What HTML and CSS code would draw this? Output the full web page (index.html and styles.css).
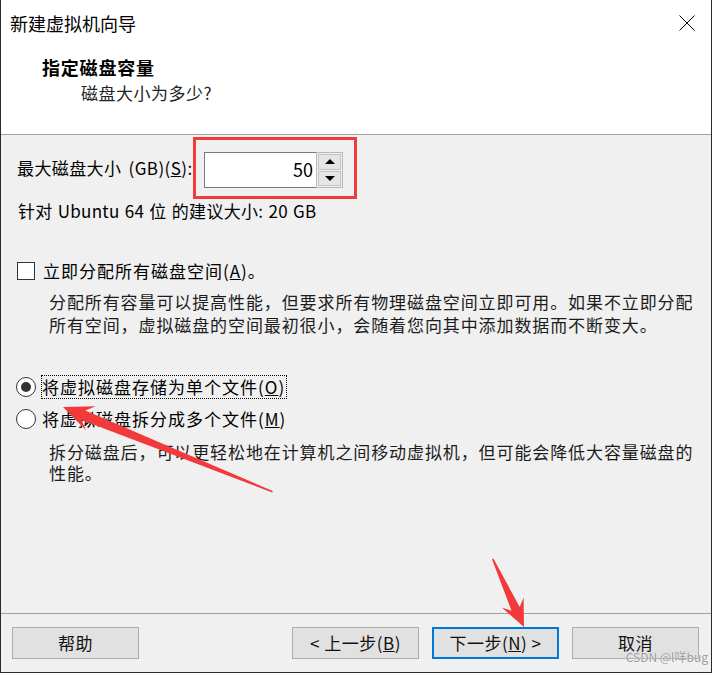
FILE: index.html
```html
<!DOCTYPE html>
<html lang="zh-CN">
<head>
<meta charset="utf-8">
<title>新建虚拟机向导</title>
<link rel="stylesheet" href="styles.css">
</head>
<body>
<div class="window">
  <div class="header">
    <div class="titlebar">
      <span class="title">新建虚拟机向导</span>
      <svg class="close" width="16" height="16" viewBox="0 0 16 16"><path d="M0.5 0.5 L15.5 15.5 M15.5 0.5 L0.5 15.5" stroke="#000" stroke-width="1" fill="none"/></svg>
    </div>
    <div class="heading">指定磁盘容量</div>
    <div class="subheading">磁盘大小为多少?</div>
  </div>

  <div class="content">
    <div class="size-row">
      <span class="size-label">最大磁盘大小 (GB)(<u>S</u>):</span>
      <div class="highlight">
        <div class="spin">
          <div class="spin-input">50</div>
          <div class="spin-buttons">
            <div class="spin-btn"><span class="tri-up"></span></div>
            <div class="spin-btn"><span class="tri-down"></span></div>
          </div>
        </div>
      </div>
    </div>
    <div class="hint">针对 Ubuntu 64 位 的建议大小: 20 GB</div>

    <div class="check-row">
      <span class="checkbox"></span>
      <span class="opt-label">立即分配所有磁盘空间(<u>A</u>)。</span>
    </div>
    <p class="desc desc-1">分配所有容量可以提高性能，但要求所有物理磁盘空间立即可用。如果不立即分配所有空间，虚拟磁盘的空间最初很小，会随着您向其中添加数据而不断变大。</p>

    <div class="radio-row radio-first">
      <span class="radio checked"></span>
      <span class="opt-label focus">将虚拟磁盘存储为单个文件(<u>O</u>)</span>
    </div>
    <div class="radio-row radio-second">
      <span class="radio"></span>
      <span class="opt-label">将虚拟磁盘拆分成多个文件(<u>M</u>)</span>
    </div>
    <p class="desc desc-2">拆分磁盘后，可以更轻松地在计算机之间移动虚拟机，但可能会降低大容量磁盘的性能。</p>
  </div>

  <div class="footer">
    <button class="btn">帮助</button>
    <div class="btn-group">
      <button class="btn">&lt; 上一步(<u>B</u>)</button>
      <button class="btn btn-default">下一步(<u>N</u>) &gt;</button>
      <button class="btn">取消</button>
    </div>
  </div>

  <div class="watermark">CSDN @l咩bug</div>

  <svg class="arrows" width="712" height="673" viewBox="0 0 712 673">
    <polygon fill="#f23a3d" points="63,407 95.7,406.2 85.3,410.6 272.8,491.0 272.2,492.5 81.5,419.9 85.9,430.3"/>
    <polygon fill="#f23a3d" points="524,627 523.6,597.5 519.7,606.9 493.4,558.6 492.0,559.2 511.5,610.7 501.8,607.5"/>
  </svg>
</div>
</body>
</html>
```

FILE: styles.css
```css
* { box-sizing: border-box; }

html, body {
  margin: 0;
  padding: 0;
  background: #f0f0f0;
}

.window {
  position: relative;
  width: 712px;
  height: 673px;
  background: #f0f0f0;
  border-left: 1px solid #2b2b2b;
  border-right: 1px solid #2b2b2b;
  border-bottom: 1px solid #2b2b2b;
  display: flex;
  flex-direction: column;
  font-family: "Noto Sans CJK SC", "Microsoft YaHei", sans-serif;
  color: #000;
  overflow: hidden;
}

/* ---------- header ---------- */
.header {
  flex: none;
  height: 135px;
  background: #fff;
  border-bottom: 1px solid #a0a0a0;
}

.titlebar {
  height: 45px;
  display: flex;
  align-items: center;
  justify-content: space-between;
  padding: 0 16px 0 9px;
}

.title {
  font-size: 18px;
  line-height: 24px;
}

.close { display: block; }

.heading {
  margin-top: 10px;
  padding-left: 41px;
  font-size: 18px;
  line-height: 24px;
  font-weight: bold;
  letter-spacing: 0.8px;
}

.subheading {
  margin-top: 2px;
  padding-left: 80px;
  font-size: 17px;
  line-height: 24px;
  letter-spacing: 0.5px;
  color: #222;
}

/* ---------- content ---------- */
.content {
  flex: 1;
  padding: 2px 0 0 15px;
  font-size: 17px;
}

.size-row {
  display: flex;
  align-items: center;
}

.size-label {
  width: 177px;
  padding-left: 1px;
  line-height: 24px;
  white-space: nowrap;
  letter-spacing: 0.4px;
  word-spacing: 3px;
}

.highlight {
  border: 3px solid #f23b3d;
  padding: 12px 11px 8px 8px;
}

.spin {
  display: flex;
  height: 36px;
}

.spin-input {
  width: 112px;
  height: 36px;
  background: #fff;
  border: 1px solid #7a7a7a;
  border-right: none;
  text-align: right;
  padding-right: 3px;
  font-size: 18px;
  line-height: 33px;
}

.spin-buttons {
  width: 27px;
  height: 36px;
  border: 1px solid #b9b9b9;
  background: #f0f0f0;
  display: flex;
  flex-direction: column;
  padding: 1px;
  gap: 1px;
}

.spin-btn {
  flex: 1;
  background: #e5e5e5;
  border: 1px solid #c4c4c4;
  display: flex;
  align-items: center;
  justify-content: center;
}

.tri-up {
  width: 0;
  height: 0;
  border-left: 5px solid transparent;
  border-right: 5px solid transparent;
  border-bottom: 5px solid #000;
}

.tri-down {
  width: 0;
  height: 0;
  border-left: 5px solid transparent;
  border-right: 5px solid transparent;
  border-top: 5px solid #000;
}

.hint {
  padding-left: 2px;
  line-height: 24px;
  margin-top: 0;
  letter-spacing: 0.3px;
  word-spacing: 1px;
}

.check-row {
  margin-top: 37px;
  height: 22px;
  display: flex;
  align-items: center;
  gap: 8px;
  padding-left: 1px;
}

.checkbox {
  width: 18px;
  height: 18px;
  border: 1px solid #333;
  background: #fff;
  flex: none;
}

.opt-label {
  line-height: 22px;
  letter-spacing: 1px;
  white-space: nowrap;
}

.desc {
  margin: 8px 0 0 0;
  padding-left: 33px;
  width: 692px;
  line-height: 23px;
  letter-spacing: 0.9px;
  color: #1c1c1c;
}

.radio-row {
  height: 24px;
  display: flex;
  align-items: center;
  gap: 6px;
}

.radio-first { margin-top: 39px; }
.radio-second { margin-top: 8px; }

.radio {
  width: 20px;
  height: 20px;
  border-radius: 50%;
  border: 1px solid #333;
  background: #fff;
  flex: none;
  display: flex;
  align-items: center;
  justify-content: center;
}

.radio.checked::after {
  content: "";
  width: 10px;
  height: 10px;
  border-radius: 50%;
  background: #333;
}

.focus {
  outline: 1px dotted #000;
  outline-offset: 0;
  padding-right: 1px;
}

.desc-2 {
  margin-top: 10px;
  line-height: 21px;
}

/* ---------- footer ---------- */
.footer {
  flex: none;
  height: 59px;
  border-top: 1px solid #a0a0a0;
  padding: 13px 12px 0 11px;
  display: flex;
  justify-content: space-between;
  align-items: flex-start;
}

.btn-group {
  display: flex;
  gap: 13px;
}

.btn {
  width: 127px;
  height: 32px;
  background: #e1e1e1;
  border: 1px solid #adadad;
  font-family: "Noto Sans CJK SC", "Microsoft YaHei", sans-serif;
  font-size: 17px;
  color: #111;
  padding: 0;
  margin: 0;
  line-height: 28px;
  letter-spacing: 0.5px;
}

.btn-default {
  border: 2px solid #0078d7;
}

.watermark {
  position: absolute;
  right: 3px;
  bottom: 8px;
  font-family: "Noto Sans CJK SC", sans-serif;
  font-size: 12px;
  line-height: 14px;
  color: #9a9a9a;
  text-shadow: 0 0 1px #fff;
}

.arrows {
  position: absolute;
  left: -1px;
  top: 0;
  pointer-events: none;
}
```
